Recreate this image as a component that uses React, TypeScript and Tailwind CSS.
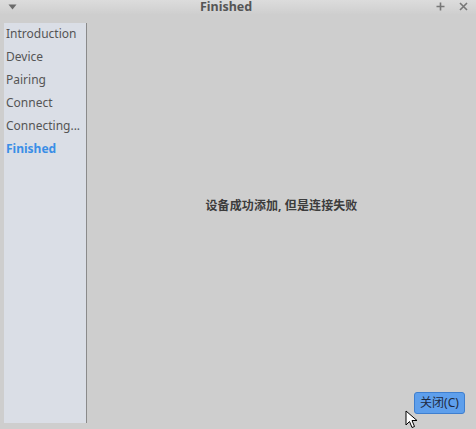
import React from "react";

export default function App() {
  const items = ["Introduction", "Device", "Pairing", "Connect", "Connecting..."];
  return (
    <div
      className="relative w-[476px] h-[429px] bg-[#cecece] overflow-hidden flex flex-col"
      style={{ fontFamily: '"Noto Sans", "Noto Sans CJK SC", sans-serif' }}
    >
      <div className="h-[14px] flex items-center bg-gradient-to-b from-[#dcdcdc] to-[#cfcfcf] relative">
        <svg className="absolute left-[8px] top-[4px]" width="9" height="6" viewBox="0 0 9 6">
          <path d="M0.5 0.5 L8.5 0.5 L4.5 5.5 Z" fill="#6a6a6a" />
        </svg>
        <div className="absolute left-[200px] w-[52px] top-0 text-center text-[12.5px] leading-[14px] font-bold text-[#555]">Finished</div>
        <svg className="absolute left-[436px] top-[2px]" width="9" height="9" viewBox="0 0 9 9">
          <path d="M4.5 0.5 V8.5 M0.5 4.5 H8.5" stroke="#777" strokeWidth="1.6" />
        </svg>
        <svg className="absolute left-[459px] top-[2px]" width="9" height="9" viewBox="0 0 9 9">
          <path d="M1 1 L8 8 M8 1 L1 8" stroke="#777" strokeWidth="1.6" />
        </svg>
      </div>
      <div className="flex flex-1 pt-[9px] pb-[6px] pl-[4px]">
        <div className="w-[83px] bg-[#dadee6] border-r border-[#8a8a8a] flex flex-col pl-[2px]">
          {items.map((t) => (
            <div key={t} className="h-[23px] leading-[22px] text-[12px] text-[#555] whitespace-nowrap">
              {t}
            </div>
          ))}
          <div className="h-[23px] leading-[22px] text-[12px] font-bold text-[#3a8ee6]">Finished</div>
        </div>
        <div className="flex-1 relative">
          <div className="absolute left-0 right-0 top-[174px] text-center text-[12px] font-bold text-[#3c3c3c] tracking-[0.1px]">
            设备成功添加, 但是连接失败
          </div>
          <div className="absolute left-[327px] top-[369px] w-[51px] h-[22px] rounded-[3px] border border-[#3f7fcf] bg-[#5e9fec] text-[12px] text-[#1e2a40] flex items-center justify-center">
            关闭(C)
          </div>
        </div>
      </div>
      <svg className="absolute left-[405px] top-[410px]" width="14" height="20" viewBox="0 0 14 20">
        <path d="M1 1 L1 15 L4.5 11.5 L7 17.5 L9.5 16.5 L7 10.5 L12 10.5 Z" fill="#fff" stroke="#000" strokeWidth="1" />
      </svg>
    </div>
  );
}
